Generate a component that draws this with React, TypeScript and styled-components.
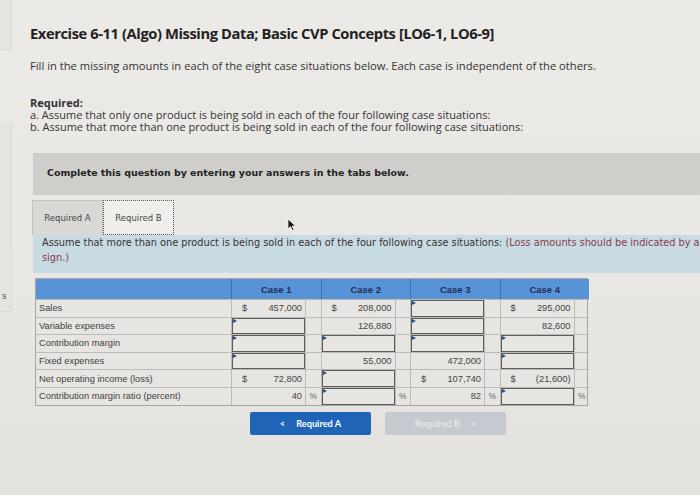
import React from "react";
import styled, { createGlobalStyle } from "styled-components";

const GlobalStyle = createGlobalStyle`
  html, body {
    margin: 0;
    padding: 0;
    width: 700px;
    height: 495px;
    overflow: hidden;
    background: #e8e6e2;
  }
  * { box-sizing: border-box; }
`;

const Page = styled.div`
  position: relative;
  display: flex;
  width: 700px;
  height: 495px;
  overflow: hidden;
  background: linear-gradient(180deg, #eceae7 0%, #e9e7e3 55%, #e4e2de 100%);
`;

const Rail = styled.div`
  width: 12px;
  flex: none;
  display: flex;
  flex-direction: column;
`;

const RailPanel = styled.div<{ $h: number; $mt: number }>`
  height: ${(p) => p.$h}px;
  margin-top: ${(p) => p.$mt}px;
  border-right: 1px solid #dcdad6;
  border-bottom: 1px solid #dcdad6;
  background: #e6e4e0;
  font-family: "Liberation Sans", Arial, sans-serif;
  font-size: 9px;
  color: #555;
  display: flex;
  align-items: flex-end;
  padding: 0 0 10px 2px;
`;

const Main = styled.main`
  flex: none;
  width: 760px;
  padding: 23px 0 0 18px;
  display: flex;
  flex-direction: column;
`;

const Title = styled.h1`
  margin: 0;
  font-family: "Open Sans", "Liberation Sans", sans-serif;
  font-weight: 700;
  font-size: 14.7px;
  letter-spacing: -0.4px;
  line-height: 20px;
  color: #222;
`;

const Intro = styled.p`
  margin: 16px 0 0 0;
  font-family: "Open Sans", "Liberation Sans", sans-serif;
  font-size: 11.2px;
  line-height: 14px;
  color: #333;
`;

const Required = styled.div`
  margin-top: 24px;
  font-family: "Open Sans", "Liberation Sans", sans-serif;
  font-size: 11px;
  line-height: 12px;
  color: #333;
`;

const ReqHead = styled.div`
  font-weight: 700;
`;

const Instruction = styled.div`
  margin: 20px 0 0 3px;
  height: 42px;
  background: #cfcecb;
  display: flex;
  align-items: center;
  padding: 0 0 4px 14px;
  font-family: "DejaVu Sans", Verdana, sans-serif;
  font-weight: 700;
  font-size: 9.45px;
  color: #222;
`;

const Tabs = styled.div`
  margin: 5px 0 0 2px;
  display: flex;
  height: 35px;
  align-items: stretch;
`;

const Tab = styled.div<{ $active?: boolean }>`
  display: flex;
  align-items: center;
  justify-content: center;
  width: 71px;
  font-family: "DejaVu Sans", Verdana, sans-serif;
  font-size: 8.5px;
  color: #444;
  background: ${(p) => (p.$active ? "#efeeeb" : "#dad8d4")};
  border: ${(p) => (p.$active ? "1px dotted #555" : "1px solid #c4c2be")};
  border-bottom: ${(p) => (p.$active ? "1px dotted #555" : "none")};
`;

const Info = styled.div`
  margin-left: 3px;
  height: 38px;
  background: #c9dbe2;
  padding: 0 0 0 9px;
  font-family: "DejaVu Sans", Verdana, sans-serif;
  font-size: 9.75px;
  line-height: 15px;
  color: #333;
  white-space: nowrap;
`;

const Loss = styled.span`
  color: #8a3a4a;
`;

const Table = styled.div`
  margin: 5px 0 0 5px;
  width: 553px;
  display: grid;
  grid-template-columns: 195px repeat(4, 74px 15.5px);
  border: 1px solid #a7a5a1;
  font-family: "Liberation Sans", Arial, sans-serif;
  font-size: 9.3px;
  color: #444;
  background: #e7e5e1;
`;

const HeadCell = styled.div<{ $span?: number }>`
  grid-column: span ${(p) => p.$span ?? 1};
  height: 20px;
  background: #5893d8;
  display: flex;
  align-items: center;
  justify-content: center;
  font-weight: 700;
  font-size: 9.5px;
  color: #1d2f57;
  border-left: ${(p) => (p.$span ? "1px solid #3f73b4" : "none")};
`;

const Label = styled.div`
  height: 17.6px;
  display: flex;
  align-items: center;
  padding-left: 3px;
  border-top: 1px solid #bcbab6;
  color: #3e3e3e;
`;

const ValueCell = styled.div`
  height: 17.6px;
  display: flex;
  align-items: center;
  justify-content: space-between;
  padding: 0 3px 0 10px;
  border-top: 1px solid #bcbab6;
  border-left: 1px solid #bcbab6;
`;

const Dollar = styled.span``;

const InputCell = styled.div`
  height: 17.6px;
  border-top: 1px solid #bcbab6;
  border-left: 1px solid #bcbab6;
  display: flex;
`;

const InputBox = styled.div`
  position: relative;
  flex: 1;
  border: 1px solid #5c5c5c;
  border-top-width: 1.5px;
  background: #e8e6e2;
`;

const Flag = styled.span`
  position: absolute;
  left: 0;
  top: 0;
  width: 0;
  height: 0;
  border-top: 2px solid transparent;
  border-bottom: 2px solid transparent;
  border-left: 4px solid #2a4d88;
`;

const PctCell = styled.div`
  height: 17.6px;
  display: flex;
  align-items: center;
  justify-content: center;
  border-top: 1px solid #bcbab6;
  border-left: 1px solid #bcbab6;
  font-size: 8.5px;
  color: #666;
`;

const Nav = styled.div`
  margin: 6px 0 0 220px;
  display: flex;
  gap: 14px;
`;

const NavButton = styled.div<{ $disabled?: boolean }>`
  width: 121px;
  height: 23px;
  border-radius: 2px;
  display: flex;
  align-items: center;
  justify-content: center;
  gap: 11px;
  font-family: "Lato", "Liberation Sans", sans-serif;
  font-weight: 700;
  font-size: 9.2px;
  background: ${(p) => (p.$disabled ? "#c5cad0" : "#1f64b6")};
  color: ${(p) => (p.$disabled ? "#e3e6ea" : "#ffffff")};
`;

const Cursor = styled.svg`
  position: absolute;
  left: 287px;
  top: 218px;
`;

type Cell =
  | { kind: "val"; dollar?: boolean; text: string }
  | { kind: "input" };

const V = (text: string, dollar = false): Cell => ({ kind: "val", text, dollar });
const I: Cell = { kind: "input" };

const rows: { label: string; cells: Cell[]; pct?: boolean }[] = [
  { label: "Sales", cells: [V("457,000", true), V("208,000", true), I, V("295,000", true)] },
  { label: "Variable expenses", cells: [I, V("126,880"), I, V("82,600")] },
  { label: "Contribution margin", cells: [I, I, I, I] },
  { label: "Fixed expenses", cells: [I, V("55,000"), V("472,000"), I] },
  {
    label: "Net operating income (loss)",
    cells: [V("72,800", true), I, V("107,740", true), V("(21,600)", true)],
  },
  {
    label: "Contribution margin ratio (percent)",
    cells: [V("40"), I, V("82"), I],
    pct: true,
  },
];

function renderCell(c: Cell, key: string) {
  if (c.kind === "input") {
    return (
      <InputCell key={key}>
        <InputBox>
          <Flag />
        </InputBox>
      </InputCell>
    );
  }
  return (
    <ValueCell key={key}>
      <Dollar>{c.dollar ? "$" : ""}</Dollar>
      <span>{c.text}</span>
    </ValueCell>
  );
}

export default function App() {
  return (
    <>
      <GlobalStyle />
      <Page>
        <Rail>
          <RailPanel $h={50} $mt={0} />
          <RailPanel $h={190} $mt={72}>s</RailPanel>
        </Rail>
        <Main>
          <Title>Exercise 6-11 (Algo) Missing Data; Basic CVP Concepts [LO6-1, LO6-9]</Title>
          <Intro>
            Fill in the missing amounts in each of the eight case situations below. Each case is
            independent of the others.
          </Intro>
          <Required>
            <ReqHead>Required:</ReqHead>
            <div>a. Assume that only one product is being sold in each of the four following case situations:</div>
            <div>b. Assume that more than one product is being sold in each of the four following case situations:</div>
          </Required>
          <Instruction>Complete this question by entering your answers in the tabs below.</Instruction>
          <Tabs>
            <Tab>Required A</Tab>
            <Tab $active>Required B</Tab>
          </Tabs>
          <Info>
            Assume that more than one product is being sold in each of the four following case situations:{" "}
            <Loss>(Loss amounts should be indicated by a minus</Loss>
            <br />
            <Loss>sign.)</Loss>
          </Info>
          <Table>
            <HeadCell />
            {[1, 2, 3, 4].map((n) => (
              <HeadCell key={n} $span={2}>
                Case {n}
              </HeadCell>
            ))}
            {rows.map((r) => (
              <React.Fragment key={r.label}>
                <Label>{r.label}</Label>
                {r.cells.map((c, i) => (
                  <React.Fragment key={i}>
                    {renderCell(c, `c${i}`)}
                    <PctCell>{r.pct ? "%" : ""}</PctCell>
                  </React.Fragment>
                ))}
              </React.Fragment>
            ))}
          </Table>
          <Nav>
            <NavButton>
              <span>&lt;</span>
              <span>Required A</span>
            </NavButton>
            <NavButton $disabled>
              <span>Required B</span>
              <span>&gt;</span>
            </NavButton>
          </Nav>
        </Main>
        <Cursor width="10" height="14" viewBox="0 0 10 14">
          <path d="M1 1 L1 11 L3.6 8.6 L5.4 12.6 L7 11.9 L5.3 8 L8.6 8 Z" fill="#111" stroke="#fff" strokeWidth="0.8" />
        </Cursor>
      </Page>
    </>
  );
}
